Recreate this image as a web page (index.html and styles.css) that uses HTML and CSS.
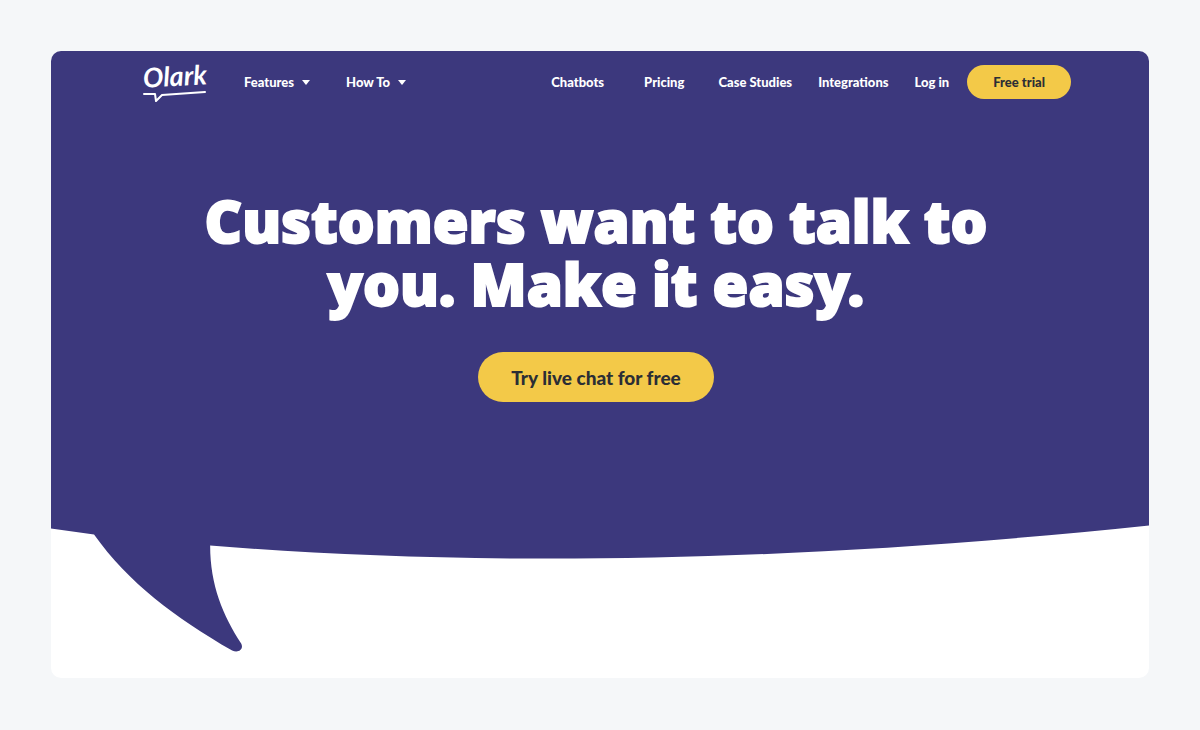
FILE: index.html
```html
<!DOCTYPE html>
<html lang="en">
<head>
  <meta charset="UTF-8">
  <meta name="viewport" content="width=device-width, initial-scale=1">
  <title>Olark</title>
  <link rel="stylesheet" href="styles.css">
</head>
<body>

<div class="page">
  <svg class="bubble" viewBox="0 0 1097 626" preserveAspectRatio="none" aria-hidden="true">
    <path d="M0 0H1097V474C720 514 400 514 159 494C159 534 172 564 190 592C193 598 187 602 181 599C124 566 77 531 43 483L0 477Z"/>
  </svg>

  <div class="content">
    <header class="header">
      <a class="logo" href="#">
        <span class="logo-name">Olark</span>
        <svg class="logo-line" viewBox="0 0 64 12" aria-hidden="true">
          <path d="M1 3L12 3L13 10L19 4L62 1"/>
        </svg>
      </a>

      <nav class="menu">
        <button class="menu-btn" type="button">Features <span class="caret"></span></button>
        <button class="menu-btn" type="button">How To <span class="caret"></span></button>
      </nav>

      <nav class="links">
        <a class="wide" href="#">Chatbots</a>
        <a class="medium" href="#">Pricing</a>
        <a href="#">Case Studies</a>
        <a href="#">Integrations</a>
        <a href="#">Log in</a>
      </nav>
      <button class="btn btn-small" type="button">Free trial</button>
    </header>

    <main class="hero">
      <h1>Customers want to talk to you. Make it easy.</h1>
      <button class="btn btn-large" type="button">Try live chat for free</button>
    </main>
  </div>
</div>

</body>
</html>
```
FILE: styles.css
```css
* {
  box-sizing: border-box;
}

body {
  margin: 0;
  min-height: 100vh;
  padding: 51px 51px 53px;
  display: flex;
  background: #f5f7f9;
  color: #fff;
  font-family: Lato, "Liberation Sans", sans-serif;
}

/* the bubble and the content share one grid cell */
.page {
  flex: 1;
  display: grid;
  grid-template: 1fr / 1fr;
  background: #fff;
  border-radius: 10px;
  overflow: hidden;
}

.bubble,
.content {
  grid-area: 1 / 1;
}

.bubble {
  width: 100%;
  height: 100%;
  min-height: 0;
  fill: #3c387d;
}

.content {
  z-index: 1;
}

.header {
  display: flex;
  align-items: center;
  padding: 10px 78px 8px 92px;
  font-size: 13px;
  font-weight: 900;
}

.logo {
  display: flex;
  flex-direction: column;
  width: 64px;
  color: #fff;
  text-decoration: none;
}

.logo-name {
  font-size: 27px;
  font-style: italic;
  font-weight: 700;
  line-height: 30px;
  transform: rotate(-3deg);
}

.logo-line {
  width: 64px;
  height: 12px;
  fill: none;
  stroke: #fff;
  stroke-width: 2;
  stroke-linejoin: round;
  stroke-linecap: round;
}

.menu {
  display: flex;
  gap: 36px;
  margin-left: 37px;
}

.menu-btn {
  display: flex;
  align-items: center;
  gap: 8px;
  padding: 0;
  border: 0;
  background: none;
  color: inherit;
  font: inherit;
  cursor: pointer;
}

.caret {
  border: 4px solid transparent;
  border-top: 5px solid #fff;
  border-bottom: 0;
}

.links {
  display: flex;
  gap: 26px;
  margin-left: auto;
}

.links a {
  color: #fff;
  text-decoration: none;
}

.links .wide {
  margin-right: 14px;
}

.links .medium {
  margin-right: 8px;
}

.btn {
  border: 0;
  border-radius: 25px;
  background: #f3c948;
  color: #2b2e35;
  font-family: inherit;
  font-weight: 900;
  cursor: pointer;
}

.btn-small {
  height: 34px;
  margin-left: 18px;
  padding: 0 26px;
  font-size: 13px;
}

.btn-large {
  height: 50px;
  padding: 0 33px;
  font-size: 19px;
}

.hero {
  display: flex;
  flex-direction: column;
  align-items: center;
  padding: 78px 24px 0 16px;
  text-align: center;
}

h1 {
  max-width: 880px;
  margin: 0 0 37px;
  font-family: "Noto Sans", "Open Sans", sans-serif;
  font-size: 58px;
  font-weight: 900;
  line-height: 63px;
  -webkit-text-stroke: 2px #fff;
}
```
